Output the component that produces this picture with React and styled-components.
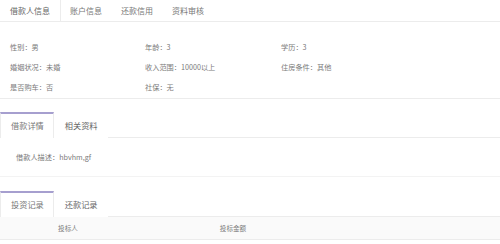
import React from "react";
import styled, { createGlobalStyle } from "styled-components";

const Global = createGlobalStyle`
  html, body { margin: 0; padding: 0; background: #fff; }
  body { font-family: "Noto Sans CJK SC", "Noto Sans", sans-serif; color: #777; }
`;

const Page = styled.div`
  width: 500px;
  display: flex;
  flex-direction: column;
`;

const TopTabs = styled.div`
  display: flex;
  height: 21px;
  border-bottom: 1px solid #ececec;
`;

const TopTab = styled.div`
  padding: 0 ${(p) => (p.$active ? 10 : 9)}px;
  font-size: 8px;
  line-height: 21px;
  color: ${(p) => (p.$active ? "#666" : "#777")};
  border-right: 1px solid ${(p) => (p.$active ? "#ececec" : "transparent")};
`;

const InfoCard = styled.div`
  border-bottom: 1px solid #ececec;
  padding: 15px 0 1px 10px;
`;

const InfoGrid = styled.div`
  display: grid;
  grid-template-columns: 135px 136px 1fr;
  grid-auto-rows: 20px;
`;

const InfoItem = styled.div`
  font-size: 7.2px;
  line-height: 20px;
  color: #7a7a7a;
`;

const Section = styled.div`
  margin-top: ${(p) => p.$top}px;
`;

const SubTabs = styled.div`
  display: flex;
  height: 25px;
  border-bottom: 1px solid #ececec;
`;

const SubTab = styled.div`
  padding: 0 9px 0 10px;
  font-size: 8.2px;
  line-height: 23px;
  color: ${(p) => (p.$active ? "#777" : "#666")};
  border-top: 2px solid ${(p) => (p.$active ? "#a69fcf" : "transparent")};
  border-left: 1px solid ${(p) => (p.$active ? "#ececec" : "transparent")};
  border-right: 1px solid ${(p) => (p.$active ? "#ececec" : "transparent")};
  background: #fff;
  margin-bottom: -1px;
  box-sizing: border-box;
`;

const Panel = styled.div`
  border-bottom: 1px solid #f3f3f3;
  padding: 14px 0 14px 16px;
  font-size: 7.2px;
  line-height: 10px;
  color: #7a7a7a;
`;

const TableHead = styled.div`
  display: grid;
  grid-template-columns: 136px 194px 1fr;
  height: 22px;
  background: #fafafa;
  border-bottom: 1px solid #ececec;
`;

const HeadCell = styled.div`
  text-align: center;
  font-size: 6.6px;
  line-height: 22px;
  color: #7a7a7a;
`;

const info = [
  "性别：男", "年龄：3", "学历：3",
  "婚姻状况：未婚", "收入范围：10000以上", "住房条件：其他",
  "是否购车：否", "社保：无",
];

export default function App() {
  return (
    <Page>
      <Global />
      <TopTabs>
        <TopTab $active>借款人信息</TopTab>
        <TopTab>账户信息</TopTab>
        <TopTab>还款信用</TopTab>
        <TopTab>资料审核</TopTab>
      </TopTabs>
      <InfoCard>
        <InfoGrid>
          {info.map((t) => (
            <InfoItem key={t}>{t}</InfoItem>
          ))}
        </InfoGrid>
      </InfoCard>
      <Section $top={13}>
        <SubTabs>
          <SubTab $active>借款详情</SubTab>
          <SubTab>相关资料</SubTab>
        </SubTabs>
        <Panel>借款人描述：hbvhm,gf</Panel>
      </Section>
      <Section $top={14}>
        <SubTabs>
          <SubTab $active>投资记录</SubTab>
          <SubTab>还款记录</SubTab>
        </SubTabs>
        <TableHead>
          <HeadCell>投标人</HeadCell>
          <HeadCell>投标金额</HeadCell>
          <HeadCell></HeadCell>
        </TableHead>
      </Section>
    </Page>
  );
}
